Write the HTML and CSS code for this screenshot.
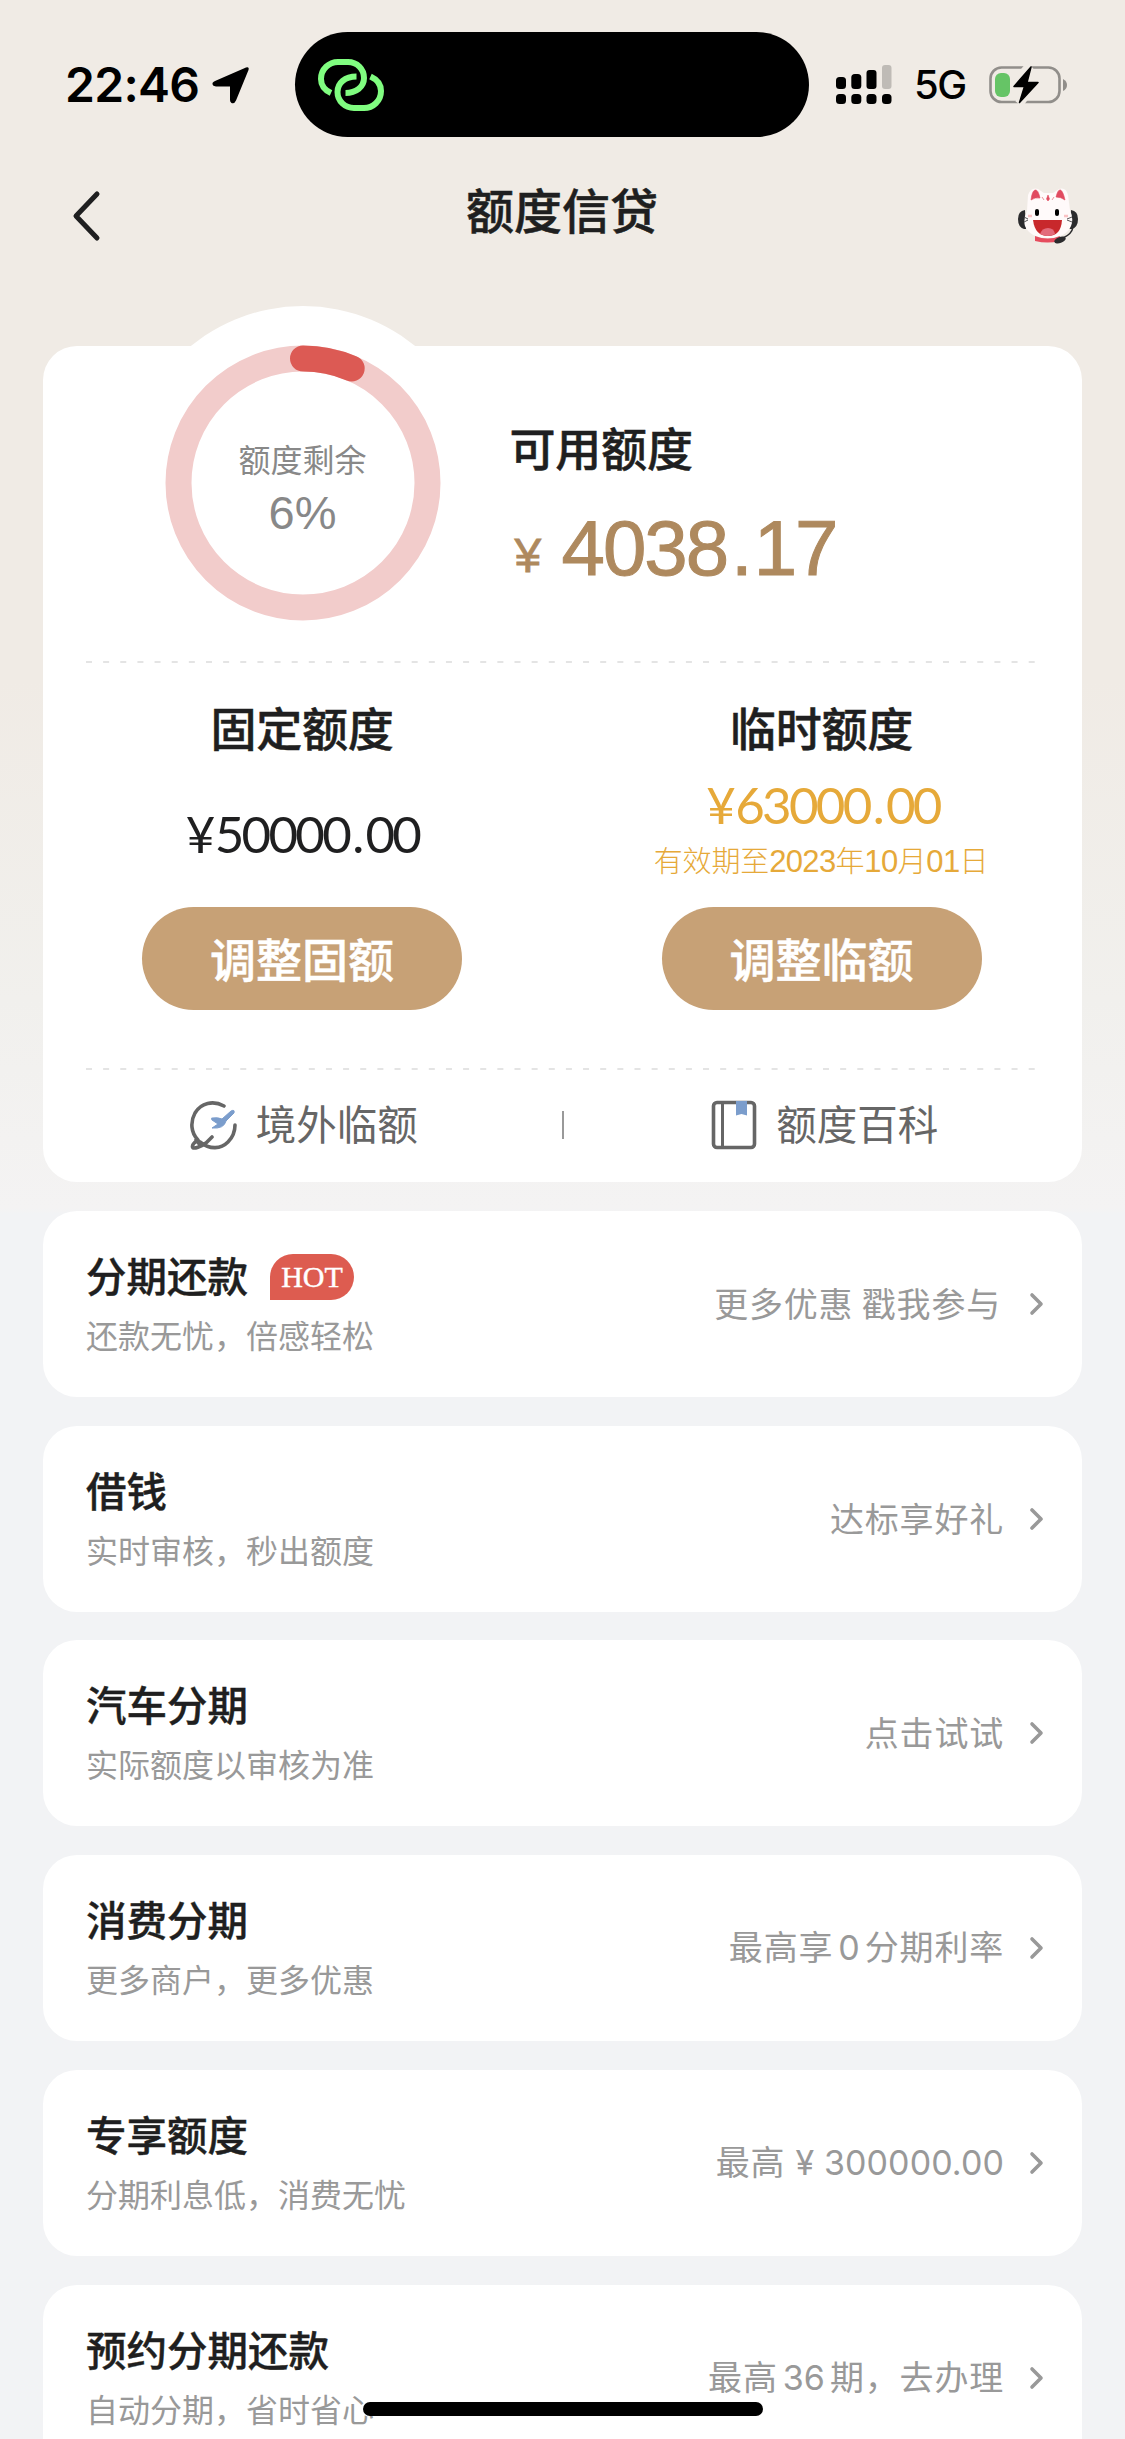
FILE: index.html
```html
<!DOCTYPE html>
<html lang="zh-CN">
<head>
<meta charset="utf-8">
<title>额度信贷</title>
<link rel="stylesheet" href="styles.css">
</head>
<body>
<div class="screen">
  <header class="status">
    <span class="clock">22:46</span>
    <svg class="location" width="38" height="38" viewBox="0 0 38 38"><path d="M3 15 34 1.500Q37.500 .5 36.500 4L24 34.500Q22.500 38 19.500 37 18 36 18 34V20.500H4Q0 20 .5 17 1 16 3 15Z"/></svg>
    <div class="island">
      <svg width="66" height="52" viewBox="0 0 66 52" fill="none" stroke="#80fd80" stroke-width="6"><path d="M13 34C6.500 31 3 26 3 20 3 10 11 3 20 3H30C39 3 46 10 46 19S38 34 27.500 34"/><path d="M38.500 17.500C27 17.500 19.500 24 19.500 33S27 49 36 49H46C55 49 63 42 63 32 63 26 59 20.500 52.500 17.500"/></svg>
    </div>
    <svg class="signal" width="56" height="40" viewBox="0 0 56 40"><rect y="12" width="10" height="12" rx="3.500"/><rect x="15.300" y="9" width="10" height="15" rx="3.500"/><rect x="30.500" y="5" width="10" height="19" rx="3"/><rect x="46" width="9.500" height="24" rx="3" fill="#bfbbb6"/><rect y="29" width="10" height="10" rx="3.500"/><rect x="15.300" y="29" width="10" height="10" rx="3.500"/><rect x="30.500" y="29" width="10" height="10" rx="3.500"/><rect x="46" y="29" width="9.500" height="10" rx="3.500"/></svg>
    <span class="network">5G</span>
    <svg class="battery" width="80" height="40" viewBox="0 0 80 40"><rect x="1.500" y="2.500" width="69" height="34.500" rx="11" fill="none" stroke="#918e8a" stroke-width="2.600"/><path d="M74 14Q78 16 78 20T74 26Z" fill="#918e8a"/><path d="M41 .5 32 11M40.500 25 30 39" stroke="#f0ebe5" stroke-width="9"/><rect x="6" y="8" width="15" height="24" rx="6" fill="#66c466"/><path d="M42 2 25 21.500H35.500L30.500 37.500 49 17.500H38Z" stroke="#000" stroke-width="1.500" stroke-linejoin="round"/></svg>
  </header>

  <nav class="navbar">
    <svg class="back" width="32" height="52" viewBox="0 0 32 52"><path d="M28 4 7 26 28 48" fill="none" stroke="#1f1f20" stroke-width="5" stroke-linecap="round" stroke-linejoin="round"/></svg>
    <h1>额度信贷</h1>
    <svg class="mascot" width="62" height="56" viewBox="0 0 62 56"><path d="M8 22Q1 23 1 31T7 41H9ZM54 22Q61 23 61 31T55 41H52Z" fill="#2b2b2d"/><path d="M10 23 11 7Q14-1 21 1L27 5H36L42 1Q49-1 51 7L53 22Q57 31 54 38 49 50 31 50T8 38Q6 31 10 23Z" fill="#fffafa"/><path d="M14 12Q15 3 18 2T23 10Q18 9 14 12ZM39 9Q41 1 43.500 2T48 12Q44 9 39 9ZM31 7 32.500 11 31 13 29.500 11ZM25 9 27 12M37 9 35 12" fill="#e14b60" stroke="#e14b60" stroke-width=".6"/><path d="M18 48Q31 53 43 48L42 53Q31 56 18 53Z" fill="#e64c5e"/><rect x="18" y="21" width="4" height="7" rx="2"/><rect x="38" y="21" width="4" height="7" rx="2"/><path d="M16 32H45Q44 48 31 48T16 32Z" fill="#c8282c"/><path d="M23 46Q25 40 31 40T38 46Q31 50 23 46Z" fill="#e36b7b"/><path d="M11 28h4M47 28h4" stroke="#fac2c4" stroke-width="2.500"/><path d="M7 29 11 31M7 34 11 32M50 31 55 29M50 32 55 34" stroke="#555"/><path d="M56 39Q55 46 46 50" fill="none" stroke="#2b2b2d" stroke-width="1.500"/><ellipse cx="43" cy="52" rx="6" ry="3" transform="rotate(-20 43 52)" fill="#2b2b2d"/></svg>
  </nav>

  <main>
    <section class="summary">
      <div class="available">
        <div class="ring">
          <svg width="354" height="354" viewBox="0 0 354 354" fill="none" stroke-width="26"><circle cx="177" cy="177" r="124.500" stroke="#f2cccb"/><circle cx="177" cy="177" r="124.500" stroke="#dc5a54" stroke-linecap="round" pathLength="100" stroke-dasharray="6.400 93.600" transform="rotate(-90 177 177)"/></svg>
          <div class="ring-label"><span class="ring-name">额度剩余</span><span class="ring-value">6%</span></div>
        </div>
        <div class="available-text">
          <h2>可用额度</h2>
          <p class="balance"><span class="yen">¥</span>4038<span class="dot">.</span>17</p>
        </div>
      </div>
      <svg class="dashes" width="950" height="2"><path d="M0 1H950" stroke="#e4e4e4" stroke-width="2" stroke-dasharray="6 11.140"/></svg>
      <div class="limits">
        <div class="limit">
          <h2>固定额度</h2>
          <div class="limit-value fixed"><p class="amount"><span class="yen">¥</span>50000<span class="dot">.</span>00</p></div>
          <button>调整固额</button>
        </div>
        <div class="limit temporary">
          <h2>临时额度</h2>
          <div class="limit-value"><p class="amount"><span class="yen">¥</span>63000<span class="dot">.</span>00</p>
          <p class="expiry">有效期至<b>2023</b>年<b>10</b>月<b>01</b>日</p></div>
          <button>调整临额</button>
        </div>
      </div>
      <svg class="dashes" width="950" height="2"><path d="M0 1H950" stroke="#e4e4e4" stroke-width="2" stroke-dasharray="6 11.140"/></svg>
      <div class="links">
        <a class="link"><svg width="48" height="50" viewBox="0 0 48 50" fill="none" stroke="#666" stroke-width="3.600" stroke-linecap="round" stroke-linejoin="round"><path d="M34 6C23 0 11 3 5 13 0 22 1 33 8 40 5 42 2 44 2.500 47 3 50 12 46 16 43L22 37M10 42C20 50 31 49 38 42 43 37 45 31 45 25M6 40 10 45"/><path d="M22 18Q28 17 32 19L41 11Q45 9 44 13L36 21Q34 29 22 28L28 24 22 20Z" fill="#7b9dcc" stroke="#7b9dcc" stroke-width="1"/></svg><span>境外临额</span></a>
        <i class="divider"></i>
        <a class="link"><svg width="48" height="50" viewBox="0 0 48 50" fill="none" stroke="#666" stroke-width="3.600"><rect x="3.500" y="2.500" width="41" height="45" rx="3.500"/><path d="M12.500 3V47" stroke-width="3"/><path d="M26 1H37V15.500L31.500 14 26 15.500Z" fill="#7b9dcc" stroke="none"/></svg><span>额度百科</span></a>
      </div>
    </section>

    <section class="item">
      <div class="item-main"><h3>分期还款<em class="hot">HOT</em></h3><p>还款无忧，倍感轻松</p></div>
      <div class="item-side shift">更多优惠 戳我参与</div><svg class="chevron" width="17" height="24" viewBox="0 0 17 24"><path d="M3 3 12 12 3 21"/></svg>
    </section>
    <section class="item">
      <div class="item-main"><h3>借钱</h3><p>实时审核，秒出额度</p></div>
      <div class="item-side">达标享好礼</div><svg class="chevron" width="17" height="24" viewBox="0 0 17 24"><path d="M3 3 12 12 3 21"/></svg>
    </section>
    <section class="item">
      <div class="item-main"><h3>汽车分期</h3><p>实际额度以审核为准</p></div>
      <div class="item-side">点击试试</div><svg class="chevron" width="17" height="24" viewBox="0 0 17 24"><path d="M3 3 12 12 3 21"/></svg>
    </section>
    <section class="item">
      <div class="item-main"><h3>消费分期</h3><p>更多商户，更多优惠</p></div>
      <div class="item-side">最高享<span class="num gap">0</span>分期利率</div><svg class="chevron" width="17" height="24" viewBox="0 0 17 24"><path d="M3 3 12 12 3 21"/></svg>
    </section>
    <section class="item">
      <div class="item-main"><h3>专享额度</h3><p>分期利息低，消费无忧</p></div>
      <div class="item-side">最高<span class="num money">¥ 300000.00</span></div><svg class="chevron" width="17" height="24" viewBox="0 0 17 24"><path d="M3 3 12 12 3 21"/></svg>
    </section>
    <section class="item">
      <div class="item-main"><h3>预约分期还款</h3><p>自动分期，省时省心</p></div>
      <div class="item-side">最高<span class="num gap">36</span>期，去办理</div><svg class="chevron" width="17" height="24" viewBox="0 0 17 24"><path d="M3 3 12 12 3 21"/></svg>
    </section>
  </main>
  <div class="home-bar"></div>
</div>
</body>
</html>
```

FILE: styles.css
```css
* { box-sizing: border-box; margin: 0; padding: 0; }

body {
  font-family: "Noto Sans CJK SC", sans-serif;
  color: #1f1f20;
  background: #f2f3f5;
}

.screen {
  position: relative;
  width: 1125px;
  height: 2439px;
  overflow: hidden;
  background: linear-gradient(#f0ebe5 0, #f0ebe5 680px, #f1f0ed 1000px, #f4f3f3 1208px, #f2f3f5 1214px);
}

/* status bar */
.status { display: flex; align-items: center; height: 169px; padding-left: 65px; color: #000; }
.clock { width: 147px; font: 600 48px/60px Inter, sans-serif; letter-spacing: -.7px; white-space: nowrap; }
.island {
  display: flex;
  align-items: center;
  width: 514px;
  height: 105px;
  margin-left: 45px;
  padding-left: 23px;
  border-radius: 53px;
  background: #000;
}
.signal { margin-left: 27px; }
.network { width: 73px; padding-left: 22px; font: 500 40px/48px Inter, sans-serif; letter-spacing: -1.500px; white-space: nowrap; }
.battery { margin-left: 24px; }

/* title bar */
.navbar { display: flex; align-items: center; justify-content: space-between; height: 94px; padding: 0 46px 0 69px; }
.navbar h1 { margin-left: 6px; padding-bottom: 17px; font-size: 48px; line-height: 64px; font-weight: 500; -webkit-text-stroke: .5px; }

main { display: flex; flex-direction: column; gap: 28.7px; padding: 83.4px 43px 0; }

/* quota summary */
.summary { height: 836px; flex: none; border-radius: 34px; background: #fff; }
.summary h2 { font-size: 46px; line-height: 60px; font-weight: 500; letter-spacing: -.2px; -webkit-text-stroke: .5px; }
.available { display: flex; height: 315px; padding-left: 82.500px; }
.ring { display: grid; width: 354px; height: 354px; margin-top: -40px; border-radius: 50%; background: #fff; }
.ring > * { grid-area: 1 / 1; }
.ring-label { display: flex; flex-direction: column; align-items: center; padding-top: 130px; color: #888; }
.ring-name { font-size: 32px; line-height: 44px; }
.ring-value { margin-top: 5px; font: 47px/56px "Liberation Sans", sans-serif; }
.available-text { padding: 70px 0 0 30px; }
.balance {
  display: flex;
  margin-top: 22px;
  font: 78px/100px "Liberation Sans", sans-serif;
  letter-spacing: -2px;
  color: #ae895e;
  -webkit-text-stroke: 1px #ae895e;
}
.balance .yen { width: 52px; padding: 8px 0 0 5px; font-size: 48px; -webkit-text-stroke: .8px; }
.balance .dot { padding: 0 3px 0 4px; }
.dashes { display: block; margin-left: 43px; }

.limits { display: flex; height: 405px; }
.limit { display: flex; flex: 1; flex-direction: column; align-items: center; padding: 33px 1.500px 0 0; }
.limit-value { display: flex; flex-direction: column; align-items: center; justify-content: center; height: 151px; }
.limit-value.fixed { padding: 5px 0 0 1px; }
.amount { display: flex; font: 51px/60px Lato, sans-serif; letter-spacing: -2.700px; }
.amount .yen { width: 29px; }
.amount .dot { padding: 0 4px 0 3px; }
.temporary .amount { margin: -8px 0 4px; padding-left: 3px; }
.expiry { margin-right: 1px; font-size: 29px; line-height: 40px; font-weight: 300; letter-spacing: -.1px; white-space: nowrap; }
.expiry b { font: 31px "Liberation Sans", sans-serif; letter-spacing: -.7px; }
.temporary .limit-value { color: #e6a939; }
.limit button {
  width: 320px;
  height: 103px;
  padding-bottom: 4px;
  border: 0;
  border-radius: 52px;
  background: #c7a176;
  color: #fff;
  font: 500 46px/60px "Noto Sans CJK SC", sans-serif;
  -webkit-text-stroke: .5px;
}

.links { display: flex; align-items: center; height: 110px; color: #666; }
.link { display: flex; flex: 1; align-items: center; justify-content: center; gap: 18px; padding-left: 3px; font-size: 40.500px; line-height: 56px; }
.link span { padding-bottom: 4px; }
.divider { width: 2px; height: 28px; background: #999; }

/* product list */
.item { display: flex; flex: none; align-items: center; height: 186px; padding: 0 36px 0 43px; border-radius: 34px; background: #fff; }
.item-main { flex: 1; padding-bottom: 2px; }
.item h3 { display: flex; align-items: center; font-size: 40.500px; line-height: 50px; font-weight: 500; -webkit-text-stroke: .4px; }
.item p { margin-top: 12px; font-size: 32px; line-height: 44px; color: #999; }
.hot {
  width: 84px;
  height: 46px;
  margin: 4px 0 0 22px;
  border-radius: 23px 23px 23px 0;
  background: #dd5c50;
  color: #fff;
  font: 30px/46px "Liberation Serif", serif;
  text-align: center;
  -webkit-text-stroke: .4px;
}
.item-side { padding-bottom: 2px; font-size: 34px; line-height: 48px; letter-spacing: .8px; color: #999; white-space: nowrap; }
.shift { margin-right: 3px; }
.num { font-family: Inter, sans-serif; letter-spacing: .1px; }
.num.gap { padding: 0 5px; }
.num.money { padding-left: 10px; }
.chevron { margin-left: 25px; fill: none; stroke: #999; stroke-width: 3.600px; stroke-linecap: round; stroke-linejoin: round; }

/* system home indicator, floating over the list */
.home-bar { position: absolute; left: 363px; top: 2402px; width: 400px; height: 14px; border-radius: 7px; background: #000; }
```
